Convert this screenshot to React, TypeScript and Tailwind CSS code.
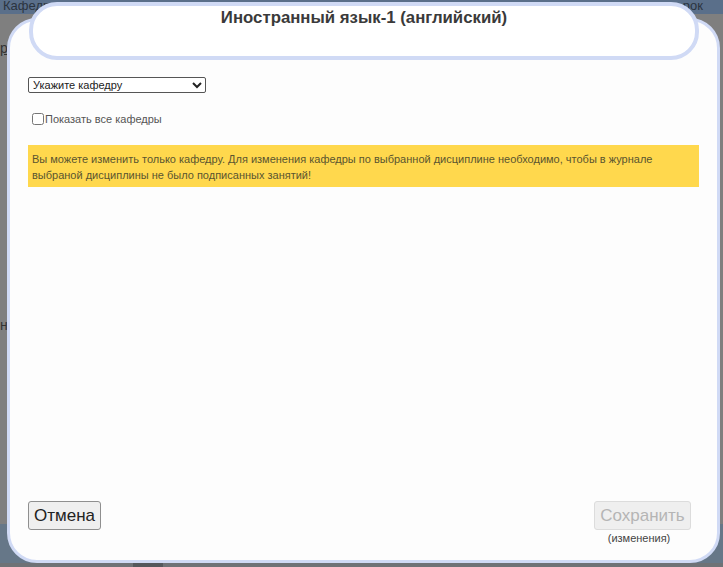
export default function App() {
  return (
    <div className="relative h-[567px] w-[723px] overflow-hidden bg-[#7f7f7f] font-['Liberation_Sans',Arial,sans-serif]">
      {/* dimmed page behind the dialog */}
      <div className="flex h-full flex-col text-[13px] text-[#2b3440]">
        <div className="flex h-[14px] items-center justify-between bg-[#5a6f8a] pl-[3px] pb-[3px] leading-none">
          <span>Кафедра</span>
          <span className="pr-[20px]">рок</span>
        </div>
        <div className="flex flex-1 flex-col text-[#333]">
          <p className="mt-[26px] text-[14px] leading-[16px] underline">р</p>
          <p className="mt-[261px] text-[14px] leading-[16px]">н</p>
        </div>
        <div className="h-[39px] bg-[#667788]" />
        <div className="flex h-[4px] bg-[#6f7276] pl-[133px]">
          <div className="h-full w-[30px] bg-[#55585c]" />
        </div>
      </div>

      {/* dialog */}
      <div className="absolute left-[7px] top-[18px] flex h-[545px] w-[713px] flex-col rounded-[30px] border-[3px] border-[#d0daf5] bg-[#fdfdfd] px-[18px]">
        <div className="mt-[56px] w-[240px]">
          <select className="block h-[16px] w-[178px] rounded-[2px] border border-[#555] bg-white text-[11px] leading-none text-[#222]">
            <option>Укажите кафедру</option>
          </select>
        </div>
        <label className="ml-[4px] mt-[18px] flex items-center text-[11px] text-[#555]">
          <input type="checkbox" className="m-0 mr-[1px] h-[12px] w-[12px]" />
          <span>Показать все кафедры</span>
        </label>
        <div className="mt-[17px] h-[42px] w-[671px] bg-[#ffd84d] px-[4px] py-[6px] text-[11px] leading-[16px] text-[#5a5530]">
          Вы можете изменить только кафедру. Для изменения кафедры по выбранной дисциплине необходимо, чтобы в журнале
          <br />
          выбраной дисциплины не было подписанных занятий!
        </div>
        <div className="mt-auto mb-[15px] flex items-start justify-between pr-[8px]">
          <button className="h-[29px] w-[73px] rounded-[3px] border border-[#8f8f8f] bg-[#efefef] text-[17px] text-[#222]">
            Отмена
          </button>
          <div className="flex flex-col items-center">
            <button
              disabled
              className="h-[29px] w-[97px] rounded-[3px] border border-[#dcdcdc] bg-[#efefef] text-[17px] text-[#b5b5b5]"
            >
              Сохранить
            </button>
            <span className="mt-[2px] pr-[7px] text-[11px] leading-[13px] text-[#444]">(изменения)</span>
          </div>
        </div>
      </div>

      {/* title box overlapping the top edge */}
      <div className="absolute left-[29px] top-[2px] flex h-[58px] w-[670px] justify-center rounded-[28px] border-[4px] border-[#d0daf5] bg-white">
        <h1 className="mt-0 text-[16.8px] leading-[24px] font-bold text-[#3a3a3a]">Иностранный язык-1 (английский)</h1>
      </div>
    </div>
  );
}
